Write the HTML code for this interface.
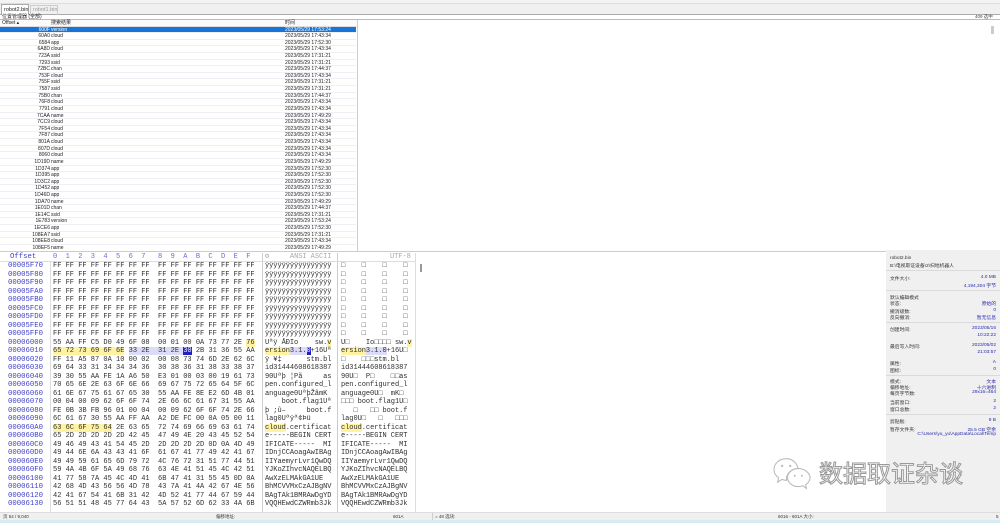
<!DOCTYPE html>
<html><head><meta charset="utf-8"><style>
*{margin:0;padding:0;box-sizing:border-box}
body{width:1000px;height:523px;overflow:hidden;background:#fff;position:relative;font-family:"Liberation Sans","Noto Sans CJK SC",sans-serif;color:#222}
.a{position:absolute}
.lr{position:absolute;left:0;width:356px;height:6.62px;font-size:5px;line-height:6.62px;border-bottom:1px solid #eef0f6}
.lr .o{position:absolute;right:306px;}
.lr .n{position:absolute;left:51px}
.lr .t{position:absolute;left:285px}
.sel{background:#1874d6;color:#fff}
.hx{position:absolute;left:0;font-family:"Liberation Mono",monospace;font-size:7px;line-height:8.5px;height:8.5px;white-space:pre;color:#303030}
.hx .of{position:absolute;left:8px;color:#4040c8;font-size:7.3px}
.hx .hb{position:absolute;left:53px}
.hx .as{position:absolute;left:265px;letter-spacing:-0.05px}
.hx .u8{position:absolute;left:341px;letter-spacing:-0.05px}
.y{background:#fff2a0}.v{background:#dcdcf8}.c{background:#2020c0;color:#fff}
.rp{position:absolute;left:886px;top:250px;width:114px;height:262px;background:#f0f0f0;font-size:4.8px;color:#333}
.rp div{position:absolute;left:4px;right:4px}
.rp b{font-weight:normal;color:#2a2ab0;position:absolute;right:0}
.rp hr{position:absolute;left:0;right:0;border:0;border-top:1px solid #dadada}
</style></head><body>
<div class="a" style="left:0;top:0;width:1000px;height:4px;background:#f3f3f3;border-bottom:1px solid #ddd"></div>
<div class="a" style="left:0;top:4px;width:1000px;height:11px;background:#f0f0f0;border-bottom:1px solid #aaa"></div>
<div class="a" style="left:1px;top:4px;width:28px;height:11px;background:#fff;border:1px solid #aaa;border-bottom:none;font-size:5.5px;line-height:10px;padding-left:2px">robot2.bin</div>
<div class="a" style="left:30px;top:5px;width:28px;height:10px;border:1px solid #ccc;border-bottom:none;font-size:5.5px;line-height:9px;padding-left:2px;color:#999">robot1.bin</div>
<div class="a" style="left:0;top:15px;width:1000px;height:5px;font-size:5px;line-height:5px;padding-left:2px">位置管理器 (全部)</div>
<div class="a" style="left:975px;top:14px;font-size:4.5px;color:#444">409 选中</div>
<div class="a" style="left:0;top:19px;width:1000px;height:1px;background:#bbb"></div>
<div class="a" style="left:0;top:20px;width:357px;height:6.5px;background:#fafafa;border-bottom:1px solid #ddd;font-size:5px;line-height:6px">
<span class="a" style="left:2px">Offset ▴</span><span class="a" style="left:51px">搜索结果</span><span class="a" style="left:285px">时间</span></div>
<div class="a" style="left:357px;top:20px;width:1px;height:232px;background:#ccc"></div>
<div class="a" style="left:991px;top:26px;width:3px;height:8px;background:#ccc"></div>
<div class="a" style="left:0;top:26.5px">
<div class="lr sel" style="top:0"><span class="o">600F</span><span class="n">version</span><span class="t">2023/05/29 17:53:24</span></div>
<div class="lr" style="top:6.62px"><span class="o">60A0</span><span class="n">cloud</span><span class="t">2023/05/29 17:43:34</span></div>
<div class="lr" style="top:13.24px"><span class="o">6584</span><span class="n">app</span><span class="t">2023/05/29 17:52:30</span></div>
<div class="lr" style="top:19.86px"><span class="o">6A8D</span><span class="n">cloud</span><span class="t">2023/05/29 17:43:34</span></div>
<div class="lr" style="top:26.48px"><span class="o">723A</span><span class="n">ssid</span><span class="t">2023/05/29 17:31:21</span></div>
<div class="lr" style="top:33.1px"><span class="o">7293</span><span class="n">ssid</span><span class="t">2023/05/29 17:31:21</span></div>
<div class="lr" style="top:39.72px"><span class="o">72BC</span><span class="n">chan</span><span class="t">2023/05/29 17:44:37</span></div>
<div class="lr" style="top:46.34px"><span class="o">753F</span><span class="n">cloud</span><span class="t">2023/05/29 17:43:34</span></div>
<div class="lr" style="top:52.96px"><span class="o">755F</span><span class="n">ssid</span><span class="t">2023/05/29 17:31:21</span></div>
<div class="lr" style="top:59.58px"><span class="o">7587</span><span class="n">ssid</span><span class="t">2023/05/29 17:31:21</span></div>
<div class="lr" style="top:66.2px"><span class="o">75B0</span><span class="n">chan</span><span class="t">2023/05/29 17:44:37</span></div>
<div class="lr" style="top:72.82px"><span class="o">76F8</span><span class="n">cloud</span><span class="t">2023/05/29 17:43:34</span></div>
<div class="lr" style="top:79.44px"><span class="o">7791</span><span class="n">cloud</span><span class="t">2023/05/29 17:43:34</span></div>
<div class="lr" style="top:86.06px"><span class="o">7CAA</span><span class="n">name</span><span class="t">2023/05/29 17:49:29</span></div>
<div class="lr" style="top:92.68px"><span class="o">7CC9</span><span class="n">cloud</span><span class="t">2023/05/29 17:43:34</span></div>
<div class="lr" style="top:99.3px"><span class="o">7F54</span><span class="n">cloud</span><span class="t">2023/05/29 17:43:34</span></div>
<div class="lr" style="top:105.92px"><span class="o">7F87</span><span class="n">cloud</span><span class="t">2023/05/29 17:43:34</span></div>
<div class="lr" style="top:112.54px"><span class="o">801A</span><span class="n">cloud</span><span class="t">2023/05/29 17:43:34</span></div>
<div class="lr" style="top:119.16px"><span class="o">807D</span><span class="n">cloud</span><span class="t">2023/05/29 17:43:34</span></div>
<div class="lr" style="top:125.78px"><span class="o">8060</span><span class="n">cloud</span><span class="t">2023/05/29 17:43:34</span></div>
<div class="lr" style="top:132.4px"><span class="o">1D19D</span><span class="n">name</span><span class="t">2023/05/29 17:49:29</span></div>
<div class="lr" style="top:139.02px"><span class="o">1D374</span><span class="n">app</span><span class="t">2023/05/29 17:52:30</span></div>
<div class="lr" style="top:145.64px"><span class="o">1D395</span><span class="n">app</span><span class="t">2023/05/29 17:52:30</span></div>
<div class="lr" style="top:152.26px"><span class="o">1D3C2</span><span class="n">app</span><span class="t">2023/05/29 17:52:30</span></div>
<div class="lr" style="top:158.88px"><span class="o">1D452</span><span class="n">app</span><span class="t">2023/05/29 17:52:30</span></div>
<div class="lr" style="top:165.5px"><span class="o">1D46D</span><span class="n">app</span><span class="t">2023/05/29 17:52:30</span></div>
<div class="lr" style="top:172.12px"><span class="o">1DA70</span><span class="n">name</span><span class="t">2023/05/29 17:49:29</span></div>
<div class="lr" style="top:178.74px"><span class="o">1E01D</span><span class="n">chan</span><span class="t">2023/05/29 17:44:37</span></div>
<div class="lr" style="top:185.36px"><span class="o">1E14C</span><span class="n">ssid</span><span class="t">2023/05/29 17:31:21</span></div>
<div class="lr" style="top:191.98px"><span class="o">1E783</span><span class="n">version</span><span class="t">2023/05/29 17:53:24</span></div>
<div class="lr" style="top:198.6px"><span class="o">1ECE6</span><span class="n">app</span><span class="t">2023/05/29 17:52:30</span></div>
<div class="lr" style="top:205.22px"><span class="o">108EA7</span><span class="n">ssid</span><span class="t">2023/05/29 17:31:21</span></div>
<div class="lr" style="top:211.84px"><span class="o">108EE8</span><span class="n">cloud</span><span class="t">2023/05/29 17:43:34</span></div>
<div class="lr" style="top:218.46px"><span class="o">108EF5</span><span class="n">name</span><span class="t">2023/05/29 17:49:29</span></div>
</div>
<div class="a" style="left:0;top:251px;width:886px;height:1px;background:#ccc"></div>

<div class="hx" style="top:253px;color:#6a6ae0"><span class="of" style="left:10px">Offset</span><span class="hb">0  1  2  3  4  5  6  7   8  9  A  B  C  D  E  F</span><span class="as" style="color:#aaa">⚙     ANSI ASCII</span><span class="u8" style="left:390px;color:#aaa">UTF-8</span></div>
<div class="a" style="left:50px;top:261px;width:1px;height:251px;background:#ddd"></div>
<div class="a" style="left:262px;top:253px;width:1px;height:259px;background:#ccc"></div>
<div class="a" style="left:337px;top:253px;width:1px;height:259px;background:#ccc"></div>
<div class="a" style="left:415px;top:253px;width:10px;height:259px;background:#fff;border-left:1px solid #ddd"></div>
<div class="a" style="left:420px;top:264px;width:2px;height:8px;background:#999"></div>
<div class="a" style="left:0;top:261px;width:415px;height:1px;background:#ddd"></div>

<div class="a" style="left:0;top:262px">
<div class="hx" style="top:0"><span class="of">00005F70</span><span class="hb">FF FF FF FF FF FF FF FF  FF FF FF FF FF FF FF FF</span><span class="as">ÿÿÿÿÿÿÿÿÿÿÿÿÿÿÿÿ</span><span class="u8">□    □    □    □</span></div>
<div class="hx" style="top:8.5px"><span class="of">00005F80</span><span class="hb">FF FF FF FF FF FF FF FF  FF FF FF FF FF FF FF FF</span><span class="as">ÿÿÿÿÿÿÿÿÿÿÿÿÿÿÿÿ</span><span class="u8">□    □    □    □</span></div>
<div class="hx" style="top:17px"><span class="of">00005F90</span><span class="hb">FF FF FF FF FF FF FF FF  FF FF FF FF FF FF FF FF</span><span class="as">ÿÿÿÿÿÿÿÿÿÿÿÿÿÿÿÿ</span><span class="u8">□    □    □    □</span></div>
<div class="hx" style="top:25.5px"><span class="of">00005FA0</span><span class="hb">FF FF FF FF FF FF FF FF  FF FF FF FF FF FF FF FF</span><span class="as">ÿÿÿÿÿÿÿÿÿÿÿÿÿÿÿÿ</span><span class="u8">□    □    □    □</span></div>
<div class="hx" style="top:34px"><span class="of">00005FB0</span><span class="hb">FF FF FF FF FF FF FF FF  FF FF FF FF FF FF FF FF</span><span class="as">ÿÿÿÿÿÿÿÿÿÿÿÿÿÿÿÿ</span><span class="u8">□    □    □    □</span></div>
<div class="hx" style="top:42.5px"><span class="of">00005FC0</span><span class="hb">FF FF FF FF FF FF FF FF  FF FF FF FF FF FF FF FF</span><span class="as">ÿÿÿÿÿÿÿÿÿÿÿÿÿÿÿÿ</span><span class="u8">□    □    □    □</span></div>
<div class="hx" style="top:51px"><span class="of">00005FD0</span><span class="hb">FF FF FF FF FF FF FF FF  FF FF FF FF FF FF FF FF</span><span class="as">ÿÿÿÿÿÿÿÿÿÿÿÿÿÿÿÿ</span><span class="u8">□    □    □    □</span></div>
<div class="hx" style="top:59.5px"><span class="of">00005FE0</span><span class="hb">FF FF FF FF FF FF FF FF  FF FF FF FF FF FF FF FF</span><span class="as">ÿÿÿÿÿÿÿÿÿÿÿÿÿÿÿÿ</span><span class="u8">□    □    □    □</span></div>
<div class="hx" style="top:68px"><span class="of">00005FF0</span><span class="hb">FF FF FF FF FF FF FF FF  FF FF FF FF FF FF FF FF</span><span class="as">ÿÿÿÿÿÿÿÿÿÿÿÿÿÿÿÿ</span><span class="u8">□    □    □    □</span></div>
<div class="hx" style="top:76.5px"><span class="of">00006000</span><span class="hb">55 AA FF C5 D0 49 6F 08  00 01 00 0A 73 77 2E <span class="y">76</span></span><span class="as">Uªÿ ÅÐIo    sw.<span class="y">v</span></span><span class="u8">U□    Io□□□□ sw.<span class="y">v</span></span></div>
<div class="hx" style="top:85px"><span class="of">00006010</span><span class="hb"><span class="y">65 72 73 69 6F 6E</span> <span class="v">33 2E  31 2E <span class="c">30</span></span> 2B 31 36 55 AA</span><span class="as"><span class="y">ersion</span><span class="v">3.1.</span><span class="c">0</span>+16Uª</span><span class="u8"><span class="y">ersion</span><span class="v">3.1.0</span>+16U□</span></div>
<div class="hx" style="top:93.5px"><span class="of">00006020</span><span class="hb">FF 11 A5 87 0A 10 00 02  00 08 73 74 6D 2E 62 6C</span><span class="as">ÿ ¥‡      stm.bl</span><span class="u8">□    □□□stm.bl</span></div>
<div class="hx" style="top:102px"><span class="of">00006030</span><span class="hb">69 64 33 31 34 34 34 36  30 38 36 31 38 33 38 37</span><span class="as">id31444608618387</span><span class="u8">id31444608618387</span></div>
<div class="hx" style="top:110.5px"><span class="of">00006040</span><span class="hb">39 30 55 AA FE 1A A6 50  E3 01 00 03 00 19 61 73</span><span class="as">90Uªþ ¦Pã     as</span><span class="u8">90U□  P□    □□as</span></div>
<div class="hx" style="top:119px"><span class="of">00006050</span><span class="hb">70 65 6E 2E 63 6F 6E 66  69 67 75 72 65 64 5F 6C</span><span class="as">pen.configured_l</span><span class="u8">pen.configured_l</span></div>
<div class="hx" style="top:127.5px"><span class="of">00006060</span><span class="hb">61 6E 67 75 61 67 65 30  55 AA FE 8E E2 6D 4B 01</span><span class="as">anguage0UªþŽâmK</span><span class="u8">anguage0U□  mK□</span></div>
<div class="hx" style="top:136px"><span class="of">00006070</span><span class="hb">00 04 00 09 62 6F 6F 74  2E 66 6C 61 67 31 55 AA</span><span class="as">    boot.flag1Uª</span><span class="u8">□□□ boot.flag1U□</span></div>
<div class="hx" style="top:144.5px"><span class="of">00006080</span><span class="hb">FE 0B 3B FB 96 01 00 04  00 09 62 6F 6F 74 2E 66</span><span class="as">þ ;û–     boot.f</span><span class="u8">   □   □□ boot.f</span></div>
<div class="hx" style="top:153px"><span class="of">00006090</span><span class="hb">6C 61 67 30 55 AA FF AA  A2 DE FC 00 0A 05 00 11</span><span class="as">lag0Uªÿª¢Þü</span><span class="u8">lag0U□   □   □□□</span></div>
<div class="hx" style="top:161.5px"><span class="of">000060A0</span><span class="hb"><span class="y">63 6C 6F 75 64</span> 2E 63 65  72 74 69 66 69 63 61 74</span><span class="as"><span class="y">cloud</span>.certificat</span><span class="u8"><span class="y">cloud</span>.certificat</span></div>
<div class="hx" style="top:170px"><span class="of">000060B0</span><span class="hb">65 2D 2D 2D 2D 2D 42 45  47 49 4E 20 43 45 52 54</span><span class="as">e-----BEGIN CERT</span><span class="u8">e-----BEGIN CERT</span></div>
<div class="hx" style="top:178.5px"><span class="of">000060C0</span><span class="hb">49 46 49 43 41 54 45 2D  2D 2D 2D 2D 0D 0A 4D 49</span><span class="as">IFICATE-----  MI</span><span class="u8">IFICATE-----  MI</span></div>
<div class="hx" style="top:187px"><span class="of">000060D0</span><span class="hb">49 44 6E 6A 43 43 41 6F  61 67 41 77 49 42 41 67</span><span class="as">IDnjCCAoagAwIBAg</span><span class="u8">IDnjCCAoagAwIBAg</span></div>
<div class="hx" style="top:195.5px"><span class="of">000060E0</span><span class="hb">49 49 59 61 65 6D 79 72  4C 76 72 31 51 77 44 51</span><span class="as">IIYaemyrLvr1QwDQ</span><span class="u8">IIYaemyrLvr1QwDQ</span></div>
<div class="hx" style="top:204px"><span class="of">000060F0</span><span class="hb">59 4A 4B 6F 5A 49 68 76  63 4E 41 51 45 4C 42 51</span><span class="as">YJKoZIhvcNAQELBQ</span><span class="u8">YJKoZIhvcNAQELBQ</span></div>
<div class="hx" style="top:212.5px"><span class="of">00006100</span><span class="hb">41 77 58 7A 45 4C 4D 41  6B 47 41 31 55 45 0D 0A</span><span class="as">AwXzELMAkGA1UE</span><span class="u8">AwXzELMAkGA1UE</span></div>
<div class="hx" style="top:221px"><span class="of">00006110</span><span class="hb">42 68 4D 43 56 56 4D 78  43 7A 41 4A 42 67 4E 56</span><span class="as">BhMCVVMxCzAJBgNV</span><span class="u8">BhMCVVMxCzAJBgNV</span></div>
<div class="hx" style="top:229.5px"><span class="of">00006120</span><span class="hb">42 41 67 54 41 6B 31 42  4D 52 41 77 44 67 59 44</span><span class="as">BAgTAk1BMRAwDgYD</span><span class="u8">BAgTAk1BMRAwDgYD</span></div>
<div class="hx" style="top:238px"><span class="of">00006130</span><span class="hb">56 51 51 48 45 77 64 43  5A 57 52 6D 62 33 4A 6B</span><span class="as">VQQHEwdCZWRmb3Jk</span><span class="u8">VQQHEwdCZWRmb3Jk</span></div>
</div>

<div class="rp">
<div style="top:6px">robot2.bin</div>
<div style="top:12px">B:\电视取证设备\2\扫地机器人</div>
<hr style="top:20px">
<div style="top:25px">文件大小:<b>4.0 MB</b></div>
<div style="top:32px"><b>4,194,304 字节</b></div>
<hr style="top:40px">
<div style="top:44px">默认编辑模式</div>
<div style="top:50px">状态:<b>原始的</b></div>
<div style="top:58px">撤消级数:<b>0</b></div>
<div style="top:64px">反向撤消:<b>暂无信息</b></div>
<hr style="top:72px">
<div style="top:76px">创建时间:<b>2023/05/16</b></div>
<div style="top:83px"><b>10:22:22</b></div>
<div style="top:93px">最后写入时间:<b>2023/05/02</b></div>
<div style="top:100px"><b>21:03:57</b></div>
<div style="top:110px">属性:<b>A</b></div>
<div style="top:117px">图标:<b>0</b></div>
<hr style="top:125px">
<div style="top:128px">模式:<b>文本</b></div>
<div style="top:134px">偏移地址:<b>十六进制</b></div>
<div style="top:140px">每页字节数:<b>29x16=464</b></div>
<div style="top:149px">当前窗口:<b>2</b></div>
<div style="top:156px">窗口总数:<b>2</b></div>
<hr style="top:164px">
<div style="top:168px">剪贴板:<b>9 B</b></div>
<div style="top:176px">暂存文件夹:<b>25.5 GB 空余</b></div>
<div style="top:182px"><b>C:\Users\yu_yu\AppData\Local\Temp</b></div>
</div>

<svg class="a" style="left:772px;top:456px" width="40" height="36" viewBox="0 0 44 40">
<g fill="#fff" stroke="#bbb" stroke-width="1.2">
<path d="M16 3C8 3 2 8 2 15c0 4 2 7 5 9l-1 5 5-3c2 1 4 1 5 1 -1-7 5-13 13-13C27 7 22 3 16 3z"/>
<path d="M29 14c-7 0-12 5-12 10s5 10 12 10c2 0 3 0 5-1l4 3-1-4c3-2 5-5 5-8 0-5-6-10-13-10z"/>
</g>
<g fill="#bbb"><circle cx="11" cy="11" r="1.3"/><circle cx="20" cy="11" r="1.3"/><circle cx="25" cy="22" r="1.1"/><circle cx="33" cy="22" r="1.1"/></g>
</svg>
<div class="a" style="left:819px;top:457px;font-size:24px;line-height:30px;color:#fff;-webkit-text-stroke:1px #999;font-family:'Noto Sans CJK SC',sans-serif">数据取证杂谈</div>

<div class="a" style="left:0;top:512px;width:1000px;height:8px;background:#f0f0f0;border-top:1px solid #ddd;font-size:4.5px;line-height:7px;color:#333">
<span class="a" style="left:3px">页 54 / 9,040</span>
<span class="a" style="left:216px">偏移地址:</span>
<span class="a" style="left:393px">601A</span>
<span class="a" style="left:432px;border-left:1px solid #ccc;padding-left:2px">= 48 选块:</span>
<span class="a" style="left:778px">6016 - 601A 大小:</span>
<span class="a" style="left:996px">5</span>
</div>
<div class="a" style="left:0;top:520px;width:1000px;height:3px;background:#d6ebf2"></div>
</body></html>
